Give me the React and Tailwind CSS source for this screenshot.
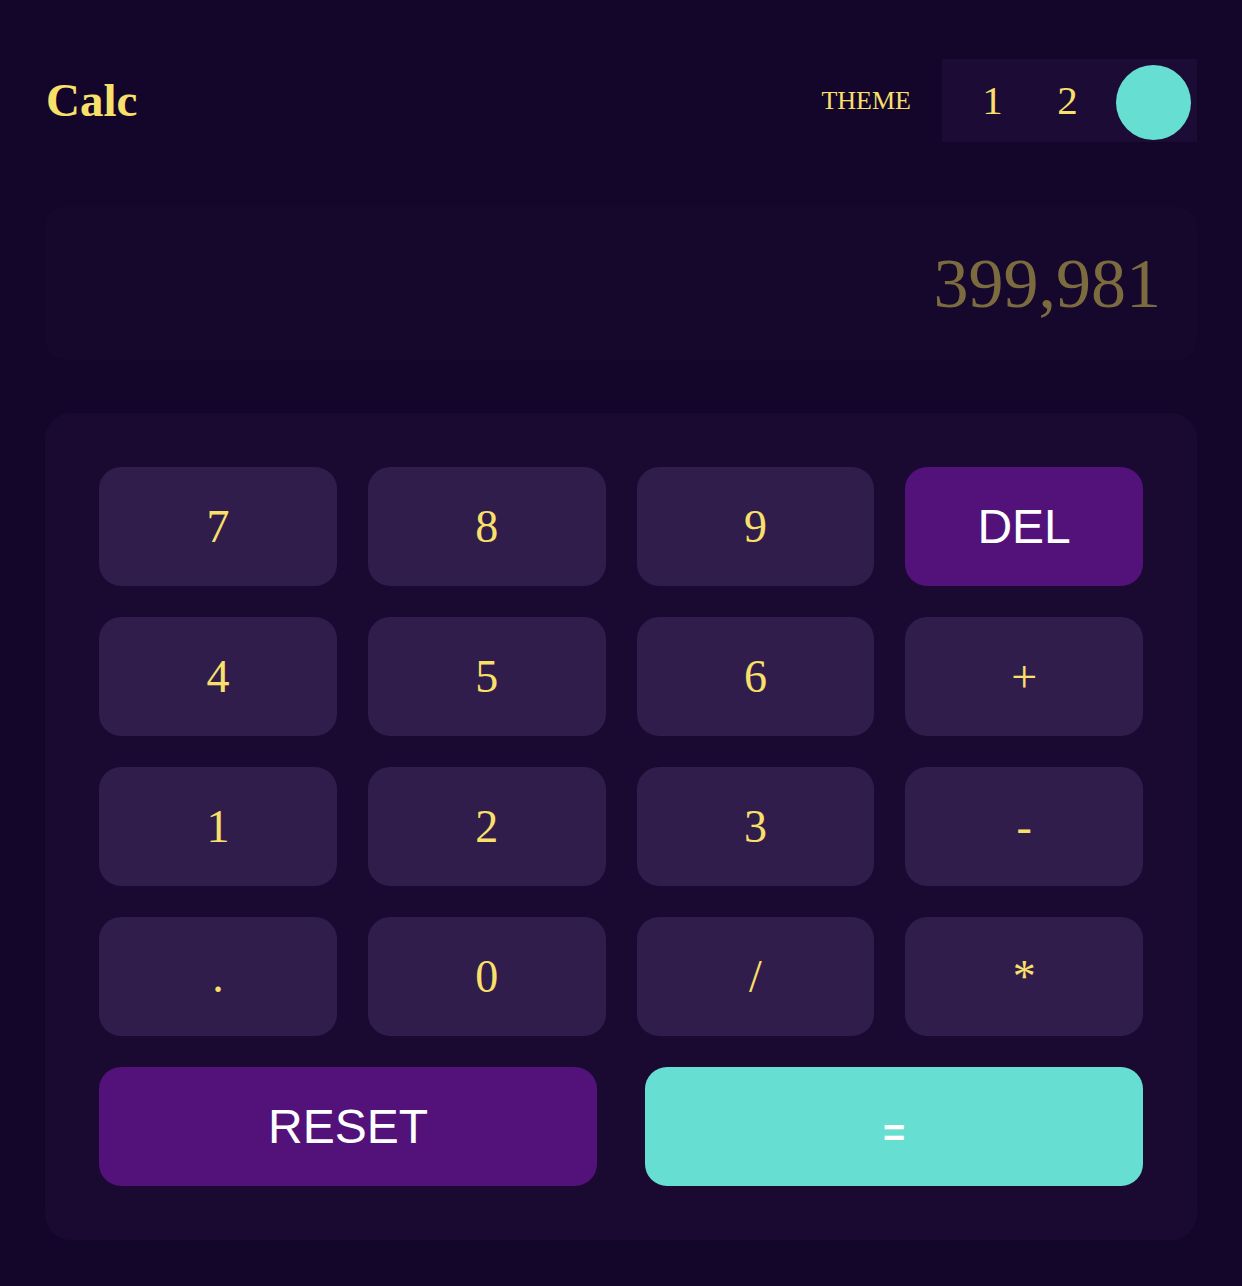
import React from 'react'

const serif = { fontFamily: '"Liberation Serif", "Times New Roman", serif' }

const keys = ['7', '8', '9', 'DEL', '4', '5', '6', '+', '1', '2', '3', '-', '.', '0', '/', '*']

function Key({ label }){
  if(label === 'DEL'){
    return (
      <button className="h-[119px] rounded-[22px] bg-[#52127a] text-white text-[48px] font-['Liberation_Sans',Arial,sans-serif] leading-none">
        {label}
      </button>
    )
  }
  return (
    <button className="h-[119px] rounded-[22px] bg-[#311d4b] text-[#f9e06a] text-[46px] font-['Liberation_Serif','Times_New_Roman',serif] leading-none">
      {label}
    </button>
  )
}

export default function App(){
  return (
    <div className="min-h-screen bg-[#14062a] px-[45px] pt-[59px] pb-[46px]" style={serif}>
      <header className="flex items-center justify-between h-[83px]">
        <h1 className="text-[47px] font-bold text-[#f9e06a] leading-none pl-[1px]">Calc</h1>
        <div className="flex items-center">
          <span className="text-[26px] text-[#f9e06a] leading-none mr-[31px]">THEME</span>
          <div className="flex items-center h-[83px] w-[255px] bg-[#1b0b35] pl-[13px] pr-[6px]">
            <span className="w-[75px] text-center text-[41px] text-[#f9e06a] leading-none">1</span>
            <span className="w-[75px] text-center text-[41px] text-[#f9e06a] leading-none">2</span>
            <span className="ml-[11px] mt-[3px] w-[75px] h-[75px] rounded-full bg-[#67ded2]"></span>
          </div>
        </div>
      </header>

      <div className="mt-[65px] h-[153px] rounded-[20px] bg-[#16072c] flex items-center justify-end pr-[36px]">
        <span className="text-[70px] text-[#7b6b3e] leading-none">399,981</span>
      </div>

      <div className="mt-[53px] rounded-[26px] bg-[#1a0a32] p-[54px]">
        <div className="grid grid-cols-4 gap-x-[31px] gap-y-[31px]">
          {keys.map(k => <Key key={k} label={k} />)}
        </div>
        <div className="mt-[31px] grid grid-cols-2 gap-[48px]">
          <button className="h-[119px] rounded-[22px] bg-[#52127a] text-white text-[48px] font-['Liberation_Sans',Arial,sans-serif] leading-none">RESET</button>
          <button className="h-[119px] rounded-[22px] bg-[#67ded2] text-white text-[38px] font-bold font-['Liberation_Sans',Arial,sans-serif] leading-none pt-[12px]">=</button>
        </div>
      </div>
    </div>
  )
}
